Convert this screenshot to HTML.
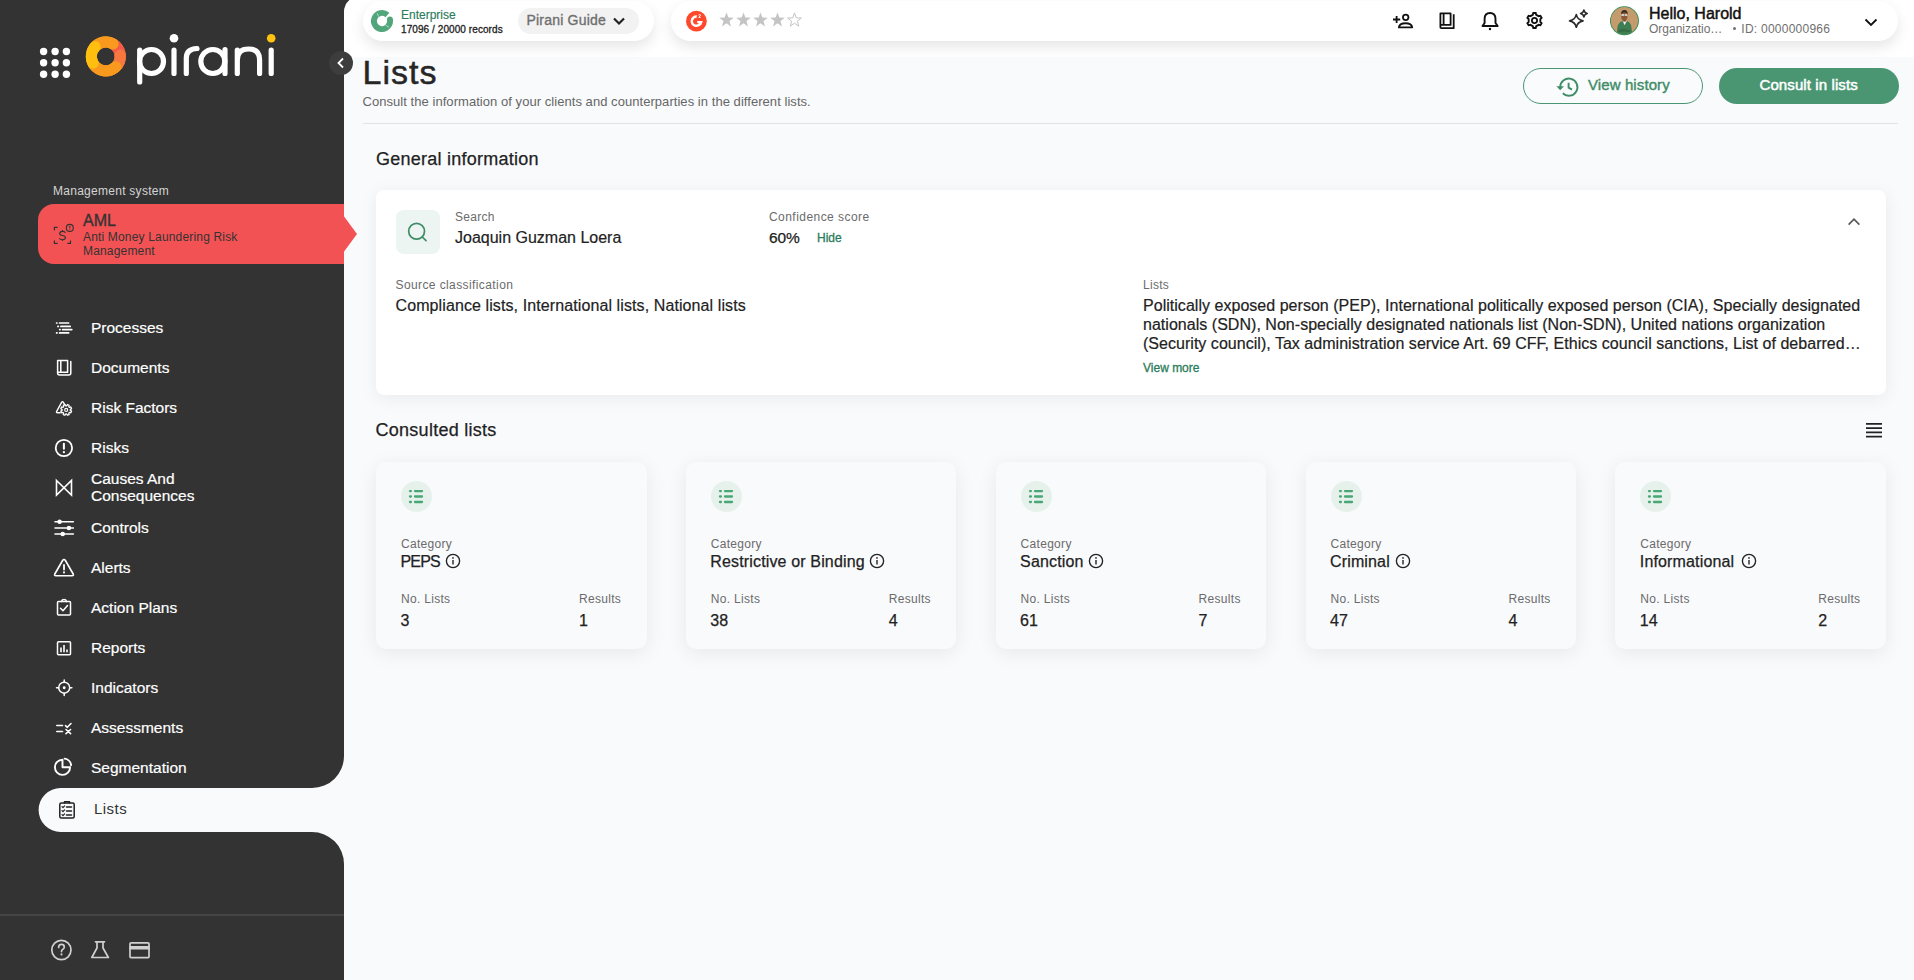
<!DOCTYPE html>
<html><head><meta charset="utf-8">
<style>
*{box-sizing:border-box;margin:0;padding:0}
html,body{width:1914px;height:980px;overflow:hidden;background:#333333;font-family:"Liberation Sans",sans-serif;color:#222}
.abs{position:absolute}
#sidebar{position:absolute;left:0;top:0;width:344px;height:980px;background:#333333}
#main{position:absolute;left:344px;top:0;width:1570px;height:980px;background:#f9fafc;overflow:hidden}
#hdr{position:absolute;left:0;top:0;width:1570px;height:57px;background:#ffffff}
.pill{position:absolute;background:#fff;border-radius:20px;box-shadow:0 6px 14px rgba(0,0,0,0.1)}
.t{position:absolute;white-space:nowrap;line-height:1}
.nav{position:absolute;left:91px;color:#fff;font-size:15.5px;line-height:1;-webkit-text-stroke:0.2px #fff}
.navic{position:absolute;left:52px;width:24px;height:24px}
.card{position:absolute;background:#fff;border-radius:8px;box-shadow:0 3px 18px rgba(0,0,0,0.065)}
.ccard{position:absolute;top:462px;width:270.5px;height:186.5px;background:#f9fafc;border-radius:10px;box-shadow:0 4px 20px rgba(0,0,0,0.075)}
.lbl{font-size:12px;color:#6b6b6b;letter-spacing:0.3px}
.val{font-size:16px;color:#222}
.med{-webkit-text-stroke:0.25px currentColor}
</style></head>
<body>
<div id="sidebar">
  <!-- logo -->
  <svg class="abs" style="left:0;top:0" width="344" height="100" viewBox="0 0 344 100">
    <g fill="#fff">
      <circle cx="43.6" cy="51.5" r="3.7"/><circle cx="55.1" cy="51.5" r="3.7"/><circle cx="66.4" cy="51.5" r="3.7"/>
      <circle cx="43.6" cy="62.8" r="3.7"/><circle cx="55.1" cy="62.8" r="3.7"/><circle cx="66.4" cy="62.8" r="3.7"/>
      <circle cx="43.6" cy="74.2" r="3.7"/><circle cx="55.1" cy="74.2" r="3.7"/><circle cx="66.4" cy="74.2" r="3.7"/>
    </g>
    <g fill="none" stroke-width="11.1"><circle cx="105.8" cy="56.4" r="14.45" stroke="#f99a1f"/><path d="M109.54 42.44 A14.45 14.45 0 0 1 120.20 57.66" stroke="#f65a4a" stroke-linecap="butt"/><path d="M120.20 55.14 A14.45 14.45 0 0 1 115.09 67.47" stroke="#f7773f" stroke-linecap="round"/><path d="M115.84 66.79 A14.45 14.45 0 0 1 91.84 60.14" stroke="#f99a1f" stroke-linecap="round"/><path d="M92.70 50.29 A14.45 14.45 0 0 1 113.03 43.89" stroke="#f99a1f" stroke-linecap="round"/><path d="M93.04 63.18 A14.45 14.45 0 0 1 95.06 46.73" stroke="#ffbf0f" stroke-linecap="round"/></g>
    <g fill="none" stroke="#fff" stroke-width="5.2" stroke-linecap="round">
      <path d="M139.7 50 V 82"/>
      <circle cx="151.5" cy="61.5" r="12"/>
      <path d="M174 50 V 73.5"/>
      <path d="M186.3 73.5 V 58 Q 186.3 49 197 48.5"/>
      <circle cx="212.8" cy="61.5" r="12"/>
      <path d="M225 49.5 V 73.5"/>
      <path d="M237.3 73.5 V 50 M237.3 60 Q 237.3 49 248.5 49 Q 259.6 49 259.6 60 V 73.5"/>
      <path d="M271.2 50 V 73.5"/>
    </g>
    <circle cx="174" cy="38.2" r="4.3" fill="#fff"/>
    <circle cx="271.2" cy="38.2" r="4.3" fill="#ffc20e"/>
  </svg>
  <div class="t" style="left:53px;top:184.7px;font-size:12px;color:#d4d4d4;letter-spacing:0.27px">Management system</div>
  <!-- AML block -->
  <svg class="abs" style="left:38px;top:204px" width="320" height="60" viewBox="0 0 320 60">
    <path d="M16 0 H306 V11 L319 30 L306 49 V60 H16 A16 16 0 0 1 0 44 V16 A16 16 0 0 1 16 0 Z" fill="#f25254"/>
    <g fill="none" stroke="#333" stroke-width="1.2">
      <path d="M16.4 26.6 V23.3 H19.6 M16.4 36.4 V39.4 H19.6 M29.4 39.4 H32.5 V36.4"/>
      <circle cx="31.8" cy="23.9" r="3.5" stroke-width="1.1"/>
      <path d="M31.8 21.9 V24.3 M31.8 25.3 V25.9" stroke-width="1"/>
      <path d="M27.3 28.9 Q27 27.3 24.5 27.3 Q21.7 27.3 21.7 29.4 Q21.7 31.2 24.5 31.5 Q27.4 31.8 27.4 33.8 Q27.4 35.7 24.5 35.7 Q21.9 35.7 21.4 34.1 M24.5 25.9 V27.3 M24.5 35.7 V37.1" stroke-width="1.15"/>
    </g>
  </svg>
  <div class="t" style="left:83px;top:212.6px;font-size:16px;color:#333;-webkit-text-stroke:0.35px #333">AML</div>
  <div class="abs" style="left:83px;top:229.7px;font-size:12px;line-height:14px;color:#333;width:250px;letter-spacing:0.17px">Anti Money Laundering Risk<br>Management</div>
  <!-- nav items -->
  <div class="t nav" style="top:319.9px">Processes</div>
  <div class="t nav" style="top:359.9px">Documents</div>
  <div class="t nav" style="top:399.9px">Risk Factors</div>
  <div class="t nav" style="top:439.9px">Risks</div>
  <div class="t nav" style="top:471.4px">Causes And</div>
  <div class="t nav" style="top:488.1px">Consequences</div>
  <div class="t nav" style="top:519.9px">Controls</div>
  <div class="t nav" style="top:559.9px">Alerts</div>
  <div class="t nav" style="top:599.9px">Action Plans</div>
  <div class="t nav" style="top:639.9px">Reports</div>
  <div class="t nav" style="top:679.9px">Indicators</div>
  <div class="t nav" style="top:719.9px">Assessments</div>
  <div class="t nav" style="top:759.9px">Segmentation</div>
  <svg class="abs" style="left:0;top:300px" width="100" height="500" viewBox="0 300 100 500">
    <g fill="none" stroke="#fff" stroke-width="1.5" stroke-linecap="round" stroke-linejoin="round">
      <!-- processes -->
      <path d="M56.6 323 h0.4 M59.6 323 H68.6 M57.9 326.4 h0.4 M60.9 326.4 H70.2 M59.7 329.6 h0.4 M62.6 329.6 H71.8 M56.6 332.9 h0.4 M59.6 332.9 H68.6" stroke-width="1.7"/>
      <!-- documents -->
      <path d="M57.6 360.6 H67.6 V372.2 H57.6 Z M60.8 360.6 V372.2 M57.6 360.6 V373 Q57.6 375 59.6 375 H68.8 Q70.8 375 70.8 373 V361.6" stroke-width="1.5"/>
      <!-- risk factors -->
      <path d="M60.2 412.8 H57.6 Q55.9 412.8 56.8 411.2 L61.6 402.4 Q62.5 400.9 63.4 402.4 L64.8 404.8" stroke-width="1.4"/>
      <path d="M70.28 410.35 L71.56 411.14 L70.87 412.81 L69.40 412.46 L68.76 413.10 L69.11 414.57 L67.44 415.26 L66.65 413.98 L65.75 413.98 L64.96 415.26 L63.29 414.57 L63.64 413.10 L63.00 412.46 L61.53 412.81 L60.84 411.14 L62.12 410.35 L62.12 409.45 L60.84 408.66 L61.53 406.99 L63.00 407.34 L63.64 406.70 L63.29 405.23 L64.96 404.54 L65.75 405.82 L66.65 405.82 L67.44 404.54 L69.11 405.23 L68.76 406.70 L69.40 407.34 L70.87 406.99 L71.56 408.66 L70.28 409.45 Z" stroke-width="1.3"/>
      <circle cx="66.2" cy="409.9" r="1.5" stroke-width="1.2"/>
      <!-- risks -->
      <circle cx="63.9" cy="448" r="8.2" stroke-width="1.8"/>
      <path d="M63.9 443.8 V448.8" stroke-width="2"/>
      <path d="M63.9 452 v0.2" stroke-width="2.2"/>
      <!-- causes -->
      <path d="M56.5 480.5 L71.5 495 V480.5 L56.5 495 Z" stroke-width="1.6" stroke-linecap="butt" stroke-linejoin="miter"/>
      <!-- controls -->
      <path d="M55 521.7 H73.4 M55 527.9 H73.4 M55 533.9 H73.4" stroke-width="1.5"/>
      <circle cx="59.6" cy="521.7" r="1.5" fill="#fff"/>
      <circle cx="68.9" cy="527.9" r="1.5" fill="#fff"/>
      <circle cx="62.7" cy="533.9" r="1.5" fill="#fff"/>
      <!-- alerts -->
      <path d="M62.6 560.5 Q64 558.5 65.4 560.5 L73.2 574 Q74 575.8 72 575.8 H56 Q54 575.8 54.8 574 Z" stroke-width="1.6"/>
      <path d="M64 565 V569.5" stroke-width="1.8"/>
      <path d="M64 572.3 v0.2" stroke-width="2"/>
      <!-- action plans -->
      <rect x="57.5" y="601.5" width="13" height="13.6" rx="1"/>
      <path d="M61.5 601.5 Q62 599.6 64 599.6 Q66 599.6 66.5 601.5"/>
      <path d="M60.5 608.3 L63 610.8 L67.5 605.5"/>
      <!-- reports -->
      <rect x="57.5" y="641.8" width="13" height="13" rx="1"/>
      <path d="M61 647.5 V652.3 M64 645 V652.3 M67 649.5 V652.3" stroke-width="1.6" stroke-linecap="butt"/>
      <!-- indicators -->
      <circle cx="64.2" cy="687.7" r="5.5"/>
      <path d="M64.2 680 V682.2 M64.2 693.2 V695.4 M56.5 687.7 H58.7 M69.7 687.7 H71.9"/>
      <circle cx="64.2" cy="687.7" r="0.7" fill="#fff"/>
      <!-- assessments -->
      <path d="M56.8 725.5 H62.5 M56.8 731.5 H62.5" stroke-width="1.6"/>
      <path d="M65.5 725.7 L67.3 727.3 L71 723.5 M66 729.5 L70.6 733.6 M70.6 729.5 L66 733.6" stroke-width="1.6"/>
      <!-- segmentation -->
      <path d="M62.5 759.7 V767.3 H70.1 A7.6 7.6 0 1 1 62.5 759.7" stroke-width="1.9"/>
      <path d="M64.6 758.6 A7.4 7.4 0 0 1 71.1 765.3" stroke-width="1.9"/>
    </g>
  </svg>
  <!-- active lists pill -->
  <svg class="abs" style="left:0;top:740px" width="344" height="130" viewBox="0 740 344 130">
    <path d="M312 788 A32 32 0 0 0 344 756 V788 Z" fill="#f9fafc"/>
    <path d="M312 832 A32 32 0 0 1 344 864 V832 Z" fill="#f9fafc"/>
    <path d="M60.6 788 H344 V832 H60.6 A22 22 0 0 1 60.6 788 Z" fill="#f9fafc"/>
    <g fill="none" stroke="#222" stroke-width="1.5" stroke-linecap="round" stroke-linejoin="round">
      <rect x="59.8" y="803" width="14.4" height="15" rx="1.5"/>
      <path d="M64.5 803 V801.8 H69.5 V803"/>
      <path d="M62 806.7 L63 807.7 L64.6 805.9 M62 810.7 L63 811.7 L64.6 809.9 M62 814.7 L63 815.7 L64.6 813.9" stroke-width="1.2"/>
      <path d="M66.5 806.9 H71.5 M66.5 810.9 H71.5 M66.5 814.9 H71.5" stroke-width="1.5"/>
    </g>
  </svg>
  <div class="t" style="left:94px;top:801.2px;font-size:15px;color:#333;letter-spacing:0.45px">Lists</div>
  <!-- bottom -->
  <div class="abs" style="left:0;top:914px;width:344px;height:2px;background:#454545"></div>
  <svg class="abs" style="left:40px;top:930px" width="120" height="40" viewBox="40 930 120 40">
    <g fill="none" stroke="#d0d0d0" stroke-width="1.7" stroke-linecap="round" stroke-linejoin="round">
      <circle cx="61.4" cy="950" r="9.6"/>
      <path d="M58.6 947.5 Q58.6 944.4 61.5 944.4 Q64.3 944.4 64.3 947 Q64.3 948.6 62.6 949.4 Q61.5 950 61.5 951.6"/>
      <path d="M61.5 954.3 v0.1" stroke-width="2"/>
      <path d="M95.5 941.8 H104.5 M97 941.8 V948 L91.8 957.5 H108.4 L103 948 V941.8"/>
      <rect x="130" y="942.8" width="19" height="14.8" rx="1"/>
      <path d="M130 946.8 H149 M130 948.6 H149" stroke-width="1.8"/>
    </g>
  </svg>
</div>
<div id="main">
  <div id="hdr"></div>
  <!-- header coords are relative to main (x-344) -->
  <div class="pill" style="left:19px;top:1px;width:291px;height:40px"></div>
  <svg class="abs" style="left:24px;top:7px" width="28" height="28" viewBox="0 0 28 28">
    <path d="M21.92 12.32 A8.1 8.1 0 1 1 19.42 7.98" fill="none" stroke="#52a67b" stroke-width="5.8"/>
    <circle cx="21.92" cy="12.32" r="2.9" fill="#52a67b"/>
    <path d="M9.2 6.2 L10.6 9.6 M17.6 18.2 L21 20.2" stroke="#d9eee2" stroke-width="0.7"/>
  </svg>
  <div class="t" style="left:57px;top:8.7px;font-size:12px;color:#2b7d5a;-webkit-text-stroke:0.15px #2b7d5a">Enterprise</div>
  <div class="t" style="left:57px;top:24.6px;font-size:10px;color:#222;letter-spacing:0.08px;-webkit-text-stroke:0.3px #222">17096 / 20000 records</div>
  <div class="abs" style="left:174px;top:8px;width:121px;height:26px;border-radius:13px;background:#f2f2f2"></div>
  <div class="t" style="left:182.5px;top:13.2px;font-size:14px;color:#6f6f6f;letter-spacing:0.2px;-webkit-text-stroke:0.35px #6f6f6f">Pirani Guide</div>
  <svg class="abs" style="left:267px;top:13px" width="16" height="16" viewBox="0 0 16 16"><path d="M3 5.5 L8 10.5 L13 5.5" fill="none" stroke="#222" stroke-width="2.2"/></svg>

  <div class="pill" style="left:327px;top:1px;width:1227px;height:40px"></div>
  <svg class="abs" style="left:339px;top:9px" width="26" height="26" viewBox="0 0 26 26">
    <circle cx="13.4" cy="12.2" r="10.4" fill="#ff492c"/>
    <path d="M13.80 7.62 A4.6 4.6 0 1 0 17.57 14.14" fill="none" stroke="#fff" stroke-width="2.5"/>
    <path d="M14.2 13.2 H18.2 L17.2 15.6" fill="none" stroke="#fff" stroke-width="2.2"/>
    <path d="M15.6 6.2 Q16.4 5 17.4 5.8 Q17.6 6.6 15.8 8.4 H17.6" fill="none" stroke="#fff" stroke-width="1"/>
  </svg>
  <svg class="abs" style="left:374px;top:11px" width="90" height="18" viewBox="0 0 90 18">
    <g fill="#c4c4c4">
      <path id="st" d="M8.5 1.5 L10.4 6.6 L15.8 6.8 L11.5 10.1 L13 15.4 L8.5 12.3 L4 15.4 L5.5 10.1 L1.2 6.8 L6.6 6.6 Z"/>
      <use href="#st" x="17"/><use href="#st" x="34"/><use href="#st" x="51"/>
    </g>
    <path d="M76.5 1.9 L78.3 6.9 L83.4 7 L79.4 10.2 L80.8 15.2 L76.5 12.2 L72.2 15.2 L73.6 10.2 L69.6 7 L74.7 6.9 Z" fill="none" stroke="#c4c4c4" stroke-width="1"/>
  </svg>

  <svg class="abs" style="left:1044px;top:5px" width="200" height="32" viewBox="1388 5 200 32">
    <g fill="none" stroke="#111" stroke-width="1.9" stroke-linejoin="round">
      <path d="M1393 19.5 H1400.2 M1396.6 16 V23" stroke-width="1.8"/>
      <circle cx="1405.7" cy="17.3" r="2.75" stroke-width="1.8"/>
      <path d="M1398.9 27.4 Q1399.5 23.3 1405.5 23.3 Q1411.6 23.3 1412.2 27.4 Z"/>
      <path d="M1440.4 13.4 H1450.6 V24.9 H1440.4 Z M1443.6 13.4 V24.9 M1440.4 13.4 V27.3 Q1440.4 28.2 1441.3 28.2 H1453.7 V14.2" stroke-width="1.8"/>
      <path d="M1482.5 26 H1497.7 L1495.5 23 V19 Q1495.5 13 1490 13 Q1484.6 13 1484.6 19 V23 Z"/>
      <circle cx="1490" cy="28.9" r="1.25" fill="#111" stroke="none"/>
      <circle cx="1534.5" cy="20.5" r="2.6" stroke-width="1.8"/>
    </g>
    <path fill="none" stroke="#111" stroke-width="1.9" stroke-linejoin="miter" d="M1532.80 14.75 L1533.31 12.99 L1535.69 12.99 L1536.20 14.75 L1538.63 16.15 L1540.41 15.72 L1541.60 17.78 L1540.33 19.10 L1540.33 21.90 L1541.60 23.22 L1540.41 25.28 L1538.63 24.85 L1536.20 26.25 L1535.69 28.01 L1533.31 28.01 L1532.80 26.25 L1530.37 24.85 L1528.59 25.28 L1527.40 23.22 L1528.67 21.90 L1528.67 19.10 L1527.40 17.78 L1528.59 15.72 L1530.37 16.15 Z"/>
    <path fill="none" stroke="#2a2a2a" stroke-width="1.7" stroke-linejoin="round" d="M1576.3 14.6 Q1577.5 19.7 1583 20.8 Q1577.5 21.9 1576.3 27.2 Q1575.1 21.9 1569.6 20.8 Q1575.1 19.7 1576.3 14.6 Z M1583.9 10.2 Q1584.4 12.8 1587.2 13.5 Q1584.4 14.2 1583.9 16.8 Q1583.4 14.2 1580.6 13.5 Q1583.4 12.8 1583.9 10.2 Z"/>
  </svg>
  <svg class="abs" style="left:1266px;top:5px" width="32" height="32" viewBox="0 0 32 32">
    <defs><clipPath id="av"><circle cx="14.4" cy="15.7" r="13.6"/></clipPath></defs>
    <circle cx="14.4" cy="15.7" r="14.5" fill="#2e8b57"/>
    <g clip-path="url(#av)">
      <rect x="0" y="0" width="32" height="32" fill="#c49b6c"/>
      <path d="M6.5 32 L7.5 21.5 Q8.5 17 12.6 16 L14.4 17.2 L16.6 16 Q20.6 17 21.4 21.5 L22.5 32 Z" fill="#3f7d52"/>
      <path d="M12.6 16 L14.6 20.2 L16.8 16 Z" fill="#f0f0f0"/>
      <path d="M8.5 25 Q14 22.6 20.5 25.4 L20 27.6 Q14 25.6 8.8 27.4 Z" fill="#356b45"/>
      <rect x="13.2" y="14" width="2.6" height="2.6" fill="#7a4e33"/>
      <ellipse cx="14.3" cy="11.4" rx="3.1" ry="4.1" fill="#8a5a3a"/>
      <path d="M11 10 Q10.8 5 14.4 5 Q18 5 17.7 10 Q17 7.4 14.4 7.6 Q11.8 7.4 11 10 Z" fill="#3b2a1e"/>
      <rect x="11.4" y="9.2" width="2.6" height="1.6" fill="#e6e6e6"/>
      <rect x="14.6" y="9.2" width="2.6" height="1.6" fill="#e6e6e6"/>
    </g>
  </svg>
  <div class="t" style="left:1305px;top:6.4px;font-size:16px;color:#111;-webkit-text-stroke:0.45px #111">Hello, Harold</div>
  <div class="t" style="left:1305px;top:22.5px;font-size:12px;color:#707070">Organizatio…</div><div class="abs" style="left:1388.6px;top:26.9px;width:3.2px;height:3.2px;border-radius:50%;background:#707070"></div><div class="t" style="left:1397.3px;top:22.5px;font-size:12px;color:#707070;letter-spacing:0.25px">ID: 0000000966</div>
  <svg class="abs" style="left:1518px;top:13px" width="18" height="18" viewBox="0 0 18 18"><path d="M3.5 6.5 L9 12 L14.5 6.5" fill="none" stroke="#111" stroke-width="1.8"/></svg>

</div>

<!-- page content (page coords) -->
<div class="t med" style="left:362.5px;top:55.2px;font-size:34px;color:#262626;letter-spacing:1.0px;-webkit-text-stroke:0.5px #262626">Lists</div>
<div class="t" style="left:362.5px;top:95px;font-size:13px;color:#666;letter-spacing:0.05px">Consult the information of your clients and counterparties in the different lists.</div>
<div class="abs" style="left:363px;top:123px;width:1535px;height:1px;background:#e2e3e5"></div>
<div class="abs" style="left:1523px;top:68px;width:180px;height:36px;border:1px solid #4a9673;border-radius:18px;background:#fafbfc"></div>
<svg class="abs" style="left:1554px;top:74.8px" width="26" height="24" viewBox="0 0 26 24">
  <g fill="none" stroke="#3f8c67" stroke-width="1.9">
    <path d="M6.2 12 A 8.6 8.6 0 1 1 8.8 18.3"/>
    <path d="M14.6 7.8 V12.6 L18 14.6"/>
  </g>
  <path d="M2.4 11.2 H10 L6.2 15.2 Z" fill="#3f8c67"/>
</svg>
<div class="t" style="left:1588px;top:77.2px;font-size:15px;color:#3f8c67;letter-spacing:0.1px;-webkit-text-stroke:0.4px #3f8c67">View history</div>
<div class="abs" style="left:1719px;top:68px;width:180px;height:36px;border-radius:18px;background:#4a9673"></div>
<div class="t" style="left:1759.5px;top:77.2px;font-size:15px;color:#fff;letter-spacing:0.1px;-webkit-text-stroke:0.5px #fff">Consult in lists</div>

<div class="t med" style="left:376px;top:150.2px;font-size:18px;color:#222;letter-spacing:0.25px">General information</div>
<div class="card" style="left:376px;top:190px;width:1510px;height:204.5px"></div>
<div class="abs" style="left:396px;top:210px;width:44px;height:44px;border-radius:8px;background:#ecf5f1"></div>
<svg class="abs" style="left:404px;top:218px" width="28" height="28" viewBox="0 0 28 28"><g fill="none" stroke="#3f8c67" stroke-width="1.7"><circle cx="12.6" cy="13.2" r="7.9"/><path d="M18.3 19 L22 22.7" stroke-linecap="round"/></g></svg>
<div class="t lbl" style="left:455px;top:210.7px">Search</div>
<div class="t val" style="left:455px;top:229.8px;-webkit-text-stroke:0.2px #222">Joaquin Guzman Loera</div>
<div class="t lbl" style="left:769px;top:210.5px;letter-spacing:0.45px">Confidence score</div>
<div class="t val med" style="left:769px;top:229.5px;letter-spacing:-0.15px;font-size:15.5px">60%</div>
<div class="t" style="left:817px;top:232.1px;font-size:12px;color:#2b7d5a;-webkit-text-stroke:0.3px #2b7d5a">Hide</div>
<svg class="abs" style="left:1845px;top:213px" width="18" height="18" viewBox="0 0 18 18"><path d="M3.6 11.6 L9 6.2 L14.4 11.6" fill="none" stroke="#555" stroke-width="1.6"/></svg>
<div class="t lbl" style="left:395.5px;top:278.7px;letter-spacing:0.4px">Source classification</div>
<div class="t val" style="left:395.5px;top:298.2px;letter-spacing:0.1px;-webkit-text-stroke:0.2px #222">Compliance lists, International lists, National lists</div>
<div class="t lbl" style="left:1143px;top:279px">Lists</div>
<div class="abs val" style="left:1143px;top:295.7px;line-height:19px;white-space:nowrap;letter-spacing:0.03px;-webkit-text-stroke:0.2px #222">Politically exposed person (PEP), International politically exposed person (CIA), Specially designated<br>nationals (SDN), Non-specially designated nationals list (Non-SDN), United nations organization<br>(Security council), Tax administration service Art. 69 CFF, Ethics council sanctions, List of debarred…</div>
<div class="t" style="left:1143px;top:361.8px;font-size:12px;color:#2b7d5a;-webkit-text-stroke:0.3px #2b7d5a">View more</div>

<div class="t med" style="left:375.5px;top:420.5px;font-size:18px;color:#222;letter-spacing:0.27px">Consulted lists</div>
<svg class="abs" style="left:1864px;top:420px" width="20" height="20" viewBox="0 0 20 20"><path d="M2 3.8 H18 M2 8.1 H18 M2 12.4 H18 M2 16.7 H18" stroke="#222" stroke-width="1.7"/></svg>

<div class="ccard" style="left:376px"></div>
<div class="abs" style="left:401px;top:481px;width:31px;height:31px;border-radius:50%;background:#e5f1ea"></div>
<svg class="abs" style="left:408px;top:488px" width="18" height="18" viewBox="0 0 18 18"><g stroke="#48a775" stroke-width="2.3" fill="none" stroke-linecap="round"><path d="M2 3.1 h0.9 M2 8.5 h0.9 M2 14 h0.9 M7 3.1 H14 M7 8.5 H14 M7 14 H14"/></g></svg>
<div class="t lbl" style="left:401px;top:538.2px">Category</div>
<div class="t val med" style="left:400.5px;top:553.9px;letter-spacing:-0.8px">PEPS</div>
<svg class="abs" style="left:444.7px;top:553px" width="16" height="16" viewBox="0 0 16 16"><circle cx="8" cy="8" r="6.6" fill="none" stroke="#222" stroke-width="1.35"/><path d="M8 7 V11.6" stroke="#222" stroke-width="1.4"/><circle cx="8" cy="4.9" r="0.85" fill="#222"/></svg>
<div class="t lbl" style="left:401px;top:592.9px">No. Lists</div>
<div class="t val med" style="left:400.5px;top:613.1px">3</div>
<div class="t lbl" style="left:579px;top:592.9px">Results</div>
<div class="t val med" style="left:579px;top:613.1px">1</div>
<div class="ccard" style="left:685.8px"></div>
<div class="abs" style="left:710.8px;top:481px;width:31px;height:31px;border-radius:50%;background:#e5f1ea"></div>
<svg class="abs" style="left:717.8px;top:488px" width="18" height="18" viewBox="0 0 18 18"><g stroke="#48a775" stroke-width="2.3" fill="none" stroke-linecap="round"><path d="M2 3.1 h0.9 M2 8.5 h0.9 M2 14 h0.9 M7 3.1 H14 M7 8.5 H14 M7 14 H14"/></g></svg>
<div class="t lbl" style="left:710.8px;top:538.2px">Category</div>
<div class="t val med" style="left:710.3px;top:553.9px;letter-spacing:0.15px">Restrictive or Binding</div>
<svg class="abs" style="left:868.7px;top:553px" width="16" height="16" viewBox="0 0 16 16"><circle cx="8" cy="8" r="6.6" fill="none" stroke="#222" stroke-width="1.35"/><path d="M8 7 V11.6" stroke="#222" stroke-width="1.4"/><circle cx="8" cy="4.9" r="0.85" fill="#222"/></svg>
<div class="t lbl" style="left:710.8px;top:592.9px">No. Lists</div>
<div class="t val med" style="left:710.3px;top:613.1px">38</div>
<div class="t lbl" style="left:888.8px;top:592.9px">Results</div>
<div class="t val med" style="left:888.8px;top:613.1px">4</div>
<div class="ccard" style="left:995.6px"></div>
<div class="abs" style="left:1020.6px;top:481px;width:31px;height:31px;border-radius:50%;background:#e5f1ea"></div>
<svg class="abs" style="left:1027.6px;top:488px" width="18" height="18" viewBox="0 0 18 18"><g stroke="#48a775" stroke-width="2.3" fill="none" stroke-linecap="round"><path d="M2 3.1 h0.9 M2 8.5 h0.9 M2 14 h0.9 M7 3.1 H14 M7 8.5 H14 M7 14 H14"/></g></svg>
<div class="t lbl" style="left:1020.6px;top:538.2px">Category</div>
<div class="t val med" style="left:1020.1px;top:553.9px;letter-spacing:0.15px">Sanction</div>
<svg class="abs" style="left:1088.3px;top:553px" width="16" height="16" viewBox="0 0 16 16"><circle cx="8" cy="8" r="6.6" fill="none" stroke="#222" stroke-width="1.35"/><path d="M8 7 V11.6" stroke="#222" stroke-width="1.4"/><circle cx="8" cy="4.9" r="0.85" fill="#222"/></svg>
<div class="t lbl" style="left:1020.6px;top:592.9px">No. Lists</div>
<div class="t val med" style="left:1020.1px;top:613.1px">61</div>
<div class="t lbl" style="left:1198.6px;top:592.9px">Results</div>
<div class="t val med" style="left:1198.6px;top:613.1px">7</div>
<div class="ccard" style="left:1305.5px"></div>
<div class="abs" style="left:1330.5px;top:481px;width:31px;height:31px;border-radius:50%;background:#e5f1ea"></div>
<svg class="abs" style="left:1337.5px;top:488px" width="18" height="18" viewBox="0 0 18 18"><g stroke="#48a775" stroke-width="2.3" fill="none" stroke-linecap="round"><path d="M2 3.1 h0.9 M2 8.5 h0.9 M2 14 h0.9 M7 3.1 H14 M7 8.5 H14 M7 14 H14"/></g></svg>
<div class="t lbl" style="left:1330.5px;top:538.2px">Category</div>
<div class="t val med" style="left:1330px;top:553.9px;letter-spacing:0.15px">Criminal</div>
<svg class="abs" style="left:1395.0px;top:553px" width="16" height="16" viewBox="0 0 16 16"><circle cx="8" cy="8" r="6.6" fill="none" stroke="#222" stroke-width="1.35"/><path d="M8 7 V11.6" stroke="#222" stroke-width="1.4"/><circle cx="8" cy="4.9" r="0.85" fill="#222"/></svg>
<div class="t lbl" style="left:1330.5px;top:592.9px">No. Lists</div>
<div class="t val med" style="left:1330px;top:613.1px">47</div>
<div class="t lbl" style="left:1508.5px;top:592.9px">Results</div>
<div class="t val med" style="left:1508.5px;top:613.1px">4</div>
<div class="ccard" style="left:1615.3px"></div>
<div class="abs" style="left:1640.3px;top:481px;width:31px;height:31px;border-radius:50%;background:#e5f1ea"></div>
<svg class="abs" style="left:1647.3px;top:488px" width="18" height="18" viewBox="0 0 18 18"><g stroke="#48a775" stroke-width="2.3" fill="none" stroke-linecap="round"><path d="M2 3.1 h0.9 M2 8.5 h0.9 M2 14 h0.9 M7 3.1 H14 M7 8.5 H14 M7 14 H14"/></g></svg>
<div class="t lbl" style="left:1640.3px;top:538.2px">Category</div>
<div class="t val med" style="left:1639.8px;top:553.9px;letter-spacing:0.15px">Informational</div>
<svg class="abs" style="left:1741.0px;top:553px" width="16" height="16" viewBox="0 0 16 16"><circle cx="8" cy="8" r="6.6" fill="none" stroke="#222" stroke-width="1.35"/><path d="M8 7 V11.6" stroke="#222" stroke-width="1.4"/><circle cx="8" cy="4.9" r="0.85" fill="#222"/></svg>
<div class="t lbl" style="left:1640.3px;top:592.9px">No. Lists</div>
<div class="t val med" style="left:1639.8px;top:613.1px">14</div>
<div class="t lbl" style="left:1818.3px;top:592.9px">Results</div>
<div class="t val med" style="left:1818.3px;top:613.1px">2</div>
<svg class="abs" style="left:343px;top:214px" width="16" height="40" viewBox="343 214 16 40"><path d="M343 215 L357 234 L343 253 Z" fill="#f25254"/></svg>
<svg class="abs" style="left:344px;top:0" width="16" height="14" viewBox="344 0 16 14"><path d="M344 0 H349.4 A16 16 0 0 0 344 12 Z" fill="#333"/></svg>
<!-- collapse btn -->
<div class="abs" style="left:329px;top:51px;width:24px;height:24px;border-radius:50%;background:#3d3d3d"></div>
<svg class="abs" style="left:329px;top:51px" width="24" height="24" viewBox="0 0 24 24"><path d="M14 7.5 L9.5 12 L14 16.5" fill="none" stroke="#fff" stroke-width="1.8"/></svg>
</body></html>
